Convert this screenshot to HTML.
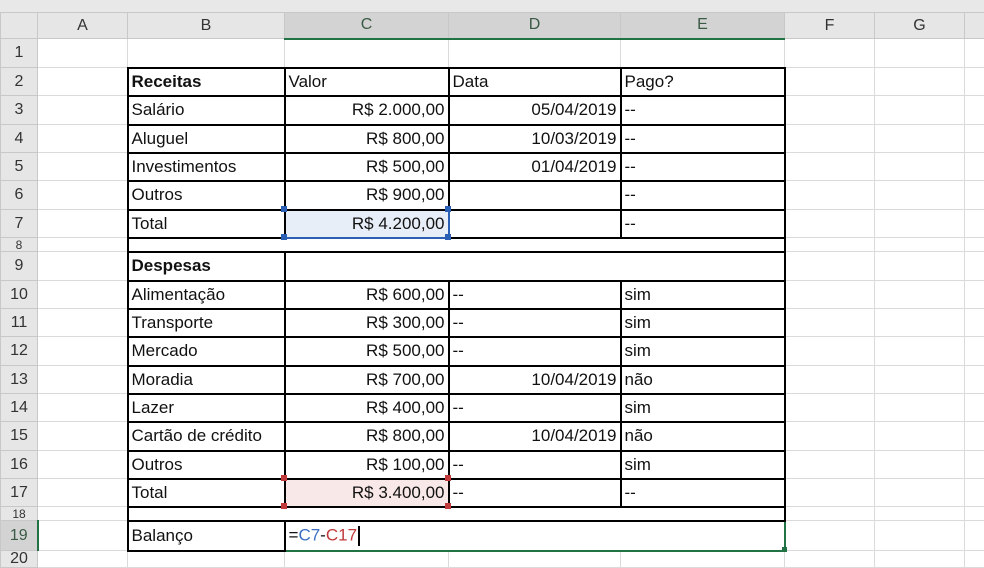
<!DOCTYPE html>
<html><head><meta charset="utf-8"><style>
body{margin:0;background:#fff;width:984px;height:566px;overflow:hidden;font-family:"Liberation Sans",sans-serif;position:relative;}
.band{position:absolute;left:0;top:0;width:984px;height:12px;background:#e8e8e8;}
table{position:absolute;left:0;top:12px;border-collapse:collapse;table-layout:fixed;width:1004px;}
td{border:1px solid #dadada;padding:0 3px;font-size:17px;color:#111;white-space:nowrap;overflow:hidden;line-height:16px;}
td.h{background:#e6e6e6;color:#333;text-align:center;border-color:#c8c8c8;font-size:16px;}
td.hs{background:#d3d3d3;color:#3a5a45;border-bottom:2px solid #217346;}
td.rs{background:#d3d3d3;color:#3a5a45;border-right:2px solid #217346;}
td.b{border:2px solid #000;}
.r{text-align:right;}
td.sel{background:#e8eef7;border:2px solid #2b5fb3;}
td.cp{background:#f9e8e8;border:2px dashed #2d6e3e;}
td.g{border:2px solid #217346;}
.sq{position:absolute;width:6px;height:6px;}
</style></head><body>
<div class="band"></div>
<table>
<colgroup><col style="width:37px"><col style="width:90px"><col style="width:157px"><col style="width:164px"><col style="width:172px"><col style="width:164px"><col style="width:90px"><col style="width:90px"><col style="width:40px"></colgroup>
<tr style="height:26px"><td class="h" style="background:#e6e6e6"></td><td class="h">A</td><td class="h">B</td><td class="h hs">C</td><td class="h hs">D</td><td class="h hs">E</td><td class="h">F</td><td class="h">G</td><td class="h"></td></tr>
<tr style="height:29px"><td class="h">1</td><td></td><td></td><td></td><td></td><td></td><td></td><td></td><td></td></tr>
<tr style="height:28px"><td class="h">2</td><td></td><td class="b"><b>Receitas</b></td><td class="b">Valor</td><td class="b">Data</td><td class="b">Pago?</td><td></td><td></td><td></td></tr>
<tr style="height:29px"><td class="h">3</td><td></td><td class="b">Salário</td><td class="b r">R$ 2.000,00</td><td class="b r">05/04/2019</td><td class="b">--</td><td></td><td></td><td></td></tr>
<tr style="height:28px"><td class="h">4</td><td></td><td class="b">Aluguel</td><td class="b r">R$ 800,00</td><td class="b r">10/03/2019</td><td class="b">--</td><td></td><td></td><td></td></tr>
<tr style="height:28px"><td class="h">5</td><td></td><td class="b">Investimentos</td><td class="b r">R$ 500,00</td><td class="b r">01/04/2019</td><td class="b">--</td><td></td><td></td><td></td></tr>
<tr style="height:29px"><td class="h">6</td><td></td><td class="b">Outros</td><td class="b r">R$ 900,00</td><td class="b r"></td><td class="b">--</td><td></td><td></td><td></td></tr>
<tr style="height:28px"><td class="h">7</td><td></td><td class="b">Total</td><td class="sel r">R$ 4.200,00</td><td class="b"></td><td class="b">--</td><td></td><td></td><td></td></tr>
<tr style="height:14px"><td class="h" style="font-size:12px;line-height:10px">8</td><td></td><td colspan="4" class="b"></td><td></td><td></td><td></td></tr>
<tr style="height:29px"><td class="h">9</td><td></td><td class="b"><b>Despesas</b></td><td colspan="3" class="b"></td><td></td><td></td><td></td></tr>
<tr style="height:28px"><td class="h">10</td><td></td><td class="b">Alimentação</td><td class="b r">R$ 600,00</td><td class="b">--</td><td class="b">sim</td><td></td><td></td><td></td></tr>
<tr style="height:28px"><td class="h">11</td><td></td><td class="b">Transporte</td><td class="b r">R$ 300,00</td><td class="b">--</td><td class="b">sim</td><td></td><td></td><td></td></tr>
<tr style="height:29px"><td class="h">12</td><td></td><td class="b">Mercado</td><td class="b r">R$ 500,00</td><td class="b">--</td><td class="b">sim</td><td></td><td></td><td></td></tr>
<tr style="height:28px"><td class="h">13</td><td></td><td class="b">Moradia</td><td class="b r">R$ 700,00</td><td class="b r">10/04/2019</td><td class="b">não</td><td></td><td></td><td></td></tr>
<tr style="height:28px"><td class="h">14</td><td></td><td class="b">Lazer</td><td class="b r">R$ 400,00</td><td class="b">--</td><td class="b">sim</td><td></td><td></td><td></td></tr>
<tr style="height:29px"><td class="h">15</td><td></td><td class="b">Cartão de crédito</td><td class="b r">R$ 800,00</td><td class="b r">10/04/2019</td><td class="b">não</td><td></td><td></td><td></td></tr>
<tr style="height:28px"><td class="h">16</td><td></td><td class="b">Outros</td><td class="b r">R$ 100,00</td><td class="b">--</td><td class="b">sim</td><td></td><td></td><td></td></tr>
<tr style="height:28px"><td class="h">17</td><td></td><td class="b">Total</td><td class="cp r">R$ 3.400,00</td><td class="b">--</td><td class="b">--</td><td></td><td></td><td></td></tr>
<tr style="height:14px"><td class="h" style="font-size:12px;line-height:10px">18</td><td></td><td colspan="4" class="b"></td><td></td><td></td><td></td></tr>
<tr style="height:30px"><td class="h rs">19</td><td></td><td class="b">Balanço</td><td colspan="3" class="g">=<span style="color:#3b6fc4">C7</span>-<span style="color:#c0393b">C17</span><span style="display:inline-block;width:2px;height:20px;background:#000;vertical-align:middle;margin-left:1px"></span></td><td></td><td></td><td></td></tr>
<tr style="height:16px"><td class="h">20</td><td></td><td></td><td></td><td></td><td></td><td></td><td></td><td></td></tr>
</table>
<div class="sq" style="left:281px;top:206px;background:#2b5fb3"></div>
<div class="sq" style="left:445px;top:206px;background:#2b5fb3"></div>
<div class="sq" style="left:281px;top:234px;background:#2b5fb3"></div>
<div class="sq" style="left:445px;top:234px;background:#2b5fb3"></div>
<div class="sq" style="left:281px;top:475px;background:#c0393b"></div>
<div class="sq" style="left:445px;top:475px;background:#c0393b"></div>
<div class="sq" style="left:281px;top:503px;background:#c0393b"></div>
<div class="sq" style="left:445px;top:503px;background:#c0393b"></div>
<div class="sq" style="left:782px;top:547px;width:5px;height:5px;background:#217346"></div>
</body></html>
